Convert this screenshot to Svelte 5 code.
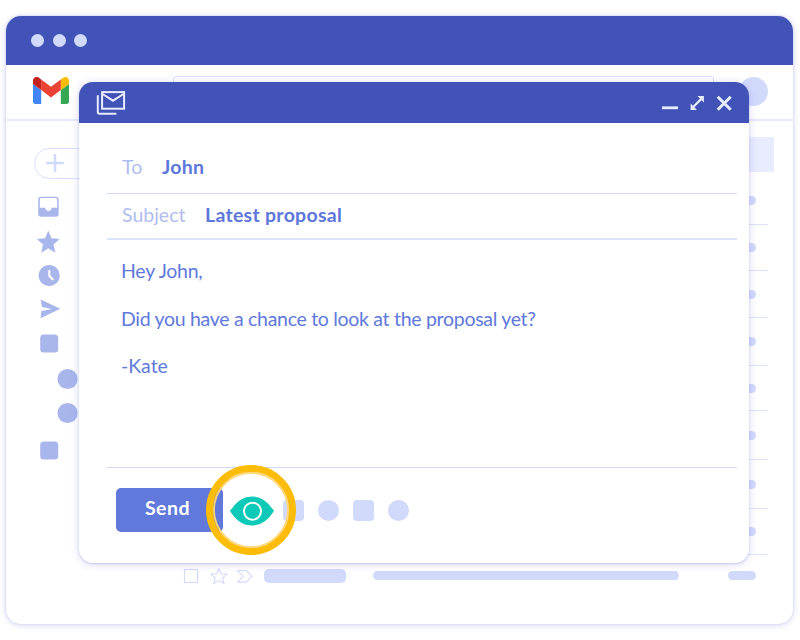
<script>
  const folders = [
    { kind: 'inbox', gap: 0 },
    { kind: 'star', gap: 11 },
    { kind: 'clock', gap: 10 },
    { kind: 'sent', gap: 9 },
    { kind: 'square', gap: 11 },
    { kind: 'dot', gap: 10.500 },
    { kind: 'dot', gap: 10 },
    { kind: 'square', gap: 14 }
  ];
  const rowHeights = [48, 46, 47, 48, 45, 49, 49, 46];
</script>

<div class="page">
  <div class="window">
    <div class="titlebar"><i></i><i></i><i></i></div>
    <div class="appbar">
      <svg class="logo" viewBox="52 42 88 66" width="36" height="27">
        <path fill="#4285f4" d="M58 108h14V74L52 59v43c0 3.32 2.69 6 6 6" />
        <path fill="#34a853" d="M120 108h14c3.32 0 6-2.69 6-6V59l-20 15" />
        <path fill="#fbbc04" d="M120 48v26l20-15v-8c0-7.42-8.47-11.65-14.4-7.2" />
        <path fill="#ea4335" d="M72 74V48l24 18 24-18v26L96 92" />
        <path fill="#c5221f" d="M52 51v8l20 15V48l-5.6-4.4c-5.94-4.45-14.4-.22-14.4 7.2" />
      </svg>
      <div class="search"></div>
      <div class="avatar"></div>
    </div>
    <div class="content">
      <nav>
        <div class="new">
          <svg width="18" height="18" viewBox="0 0 18 18"><path d="M9 1v16M1 9h16" stroke="#d2dafc" stroke-width="2.6" stroke-linecap="round" /></svg>
        </div>
        {#each folders as f}
          <svg class="folder" class:nested={f.kind === 'dot'} style="margin-top:{f.gap}px" width="24" height="24" viewBox="0 0 24 24" fill="#a9b6ec">
            {#if f.kind === 'inbox'}
              <path fill-rule="evenodd" d="M4.200 1.700h14.500a3 3 0 0 1 3 3v14a3 3 0 0 1-3 3H4.200a3 3 0 0 1-3-3v-14a3 3 0 0 1 3-3Zm0 1.400a1.400 1.400 0 0 0-1.400 1.600v8h5.400c.2 2 1.300 3.200 3.200 3.200s3.100-1.200 3.300-3.200h5.500v-8a1.500 1.500 0 0 0-1.500-1.600Z" />
            {:else if f.kind === 'star'}
              <path stroke="#a9b6ec" stroke-width=".6" stroke-linejoin="round" d="m11.300 1.300 3 7.300 7.800.7-5.900 5.200 1.800 7.700-6.700-4.100-6.700 4.100 1.800-7.700L.5 9.300l7.800-.7Z" />
            {:else if f.kind === 'clock'}
              <circle cx="12.200" cy="11.600" r="10.600" /><path d="M12.300 6.200v5.600l4 4.200" fill="none" stroke="#fff" stroke-width="2" />
            {:else if f.kind === 'sent'}
              <path d="M3.600 2.400 23.300 11.800 3.600 21.200l.8-7.200 10.400-2.100L5 10.100Z" />
            {:else if f.kind === 'square'}
              <rect x="3.200" y="2.500" width="18" height="18" rx="3.500" />
            {:else}
              <circle cx="11.600" cy="12" r="10.100" />
            {/if}
          </svg>
        {/each}
      </nav>
      <section class="list">
        <div class="toolbar"></div>
        {#each rowHeights as h}
          <div class="row" style="height:{h}px"><b class="pill"></b></div>
        {/each}
        <div class="row last">
          <svg width="71" height="18" viewBox="0 0 71 18" fill="none" stroke="#d2dafc" stroke-width="1.100">
            <rect x="2.500" y="2.500" width="13" height="13" />
            <path d="m36.900 1.700 2.300 5.100 5.500.5-4.100 3.700 1.300 5.500-5-2.900-5 2.900 1.300-5.500-4.100-3.700 5.500-.5Z" />
            <path d="M55.800 3.500h8.500l5.800 5.800-5.800 5.800h-8.500L61 9.300Z" />
          </svg>
          <b class="sender"></b><b class="summary"></b><b class="pill"></b>
        </div>
      </section>
    </div>
  </div>

  <div class="compose">
    <header>
      <svg width="30" height="26" viewBox="0 0 30 26" fill="none" stroke="#e8ecff" stroke-width="2">
        <rect x="6.100" y="2.100" width="22" height="16.600" />
        <path d="m6.500 4 10.500 6.700L27.500 4" />
        <path d="M1.800 5.200v16.900q0 1.700 1.700 1.700h16.900" />
      </svg>
      <div class="controls">
        <svg width="16" height="20" viewBox="0 0 16 20"><path d="M0 14.800h16" stroke="#e8ecff" stroke-width="2.800" /></svg>
        <svg width="14" height="20" viewBox="0 0 14 20" fill="#e8ecff"><path d="M7.500 3h6.400v6.400ZM.6 10.600V17H7Z" /><path d="m3 14.200 8.300-8.300" stroke="#e8ecff" stroke-width="2.300" /></svg>
        <svg width="16" height="20" viewBox="0 0 16 20"><path d="m1.700 3.700 13 13m0-13-13 13" stroke="#e8ecff" stroke-width="3" /></svg>
      </div>
    </header>
    <div class="form">
      <div class="field to"><span class="label l1">To</span><span class="value v1">John</span></div>
      <div class="field subject"><span class="label l2">Subject</span><span class="value v2">Latest proposal</span></div>
      <div class="message">
        <p class="m1">Hey John,</p>
        <p class="m2">Did you have a chance to look at the proposal yet?</p>
        <p class="m3">-Kate</p>
      </div>
      <footer>
        <button>Send</button>
        <svg class="eye" width="44" height="30" viewBox="0 0 44 30">
          <path fill="#0dcab8" d="M0 15Q9 .4 22 .4T44 15Q35 29.600 22 29.600T0 15Z" />
          <circle cx="22.500" cy="15.200" r="8.500" fill="none" stroke="#fff" stroke-width="1.900" />
        </svg>
        <div class="tools"><i class="sq"></i><i></i><i class="sq"></i><i></i></div>
        <div class="ring"></div>
      </footer>
    </div>
  </div>
</div>

<style>
  :global(body) { background: #fff; }
  .page, .page * { box-sizing: border-box; }
  .page {
    position: relative;
    width: 800px;
    height: 640px;
    padding: 16px 7px 0 6px;
    overflow: hidden;
    font-family: Lato, "Open Sans", sans-serif;
  }
  .window {
    height: 608px;
    border-radius: 15px;
    background: #fff;
    overflow: hidden;
    box-shadow: 0 0 1px 1px #dfe2f8, 0 1px 6px rgba(80, 80, 200, .25);
  }
  .titlebar {
    display: flex;
    align-items: center;
    gap: 8.500px;
    height: 48.500px;
    padding-left: 25px;
    background: #4153b6;
  }
  .titlebar i { width: 13px; height: 13px; border-radius: 50%; background: #d2dafc; }
  .appbar {
    display: flex;
    height: 56.500px;
    padding: 12px 25px 0 27px;
    border-bottom: 2px solid #e6eafd;
  }
  .search {
    width: 541px;
    height: 30px;
    margin: -1px 0 0 104px;
    border: 1px solid #d7dffd;
    border-radius: 3px;
  }
  .avatar { width: 29px; height: 29px; margin-left: auto; border-radius: 50%; background: #d2dafc; }
  .content { display: flex; }
  nav { display: flex; flex-direction: column; width: 168px; padding: 27px 0 0 28px; }
  .new {
    width: 116px;
    height: 31px;
    margin-bottom: 16px;
    padding: 5px 0 0 11px;
    border: 1px solid #d7dffd;
    border-radius: 16px;
  }
  .new svg { display: block; }
  .folder { display: block; margin-left: 2.500px; flex: none; }
  .nested { margin-left: 21.700px; }
  .list { width: 594px; padding-top: 16px; }
  .toolbar { width: 600px; height: 35px; margin-bottom: 5px; background: #e8ecfe; }
  .row {
    display: flex;
    align-items: center;
    justify-content: flex-end;
    padding-right: 12px;
    border-bottom: 1px solid #dde3fb;
  }
  .pill { width: 28px; height: 9px; border-radius: 5px; background: #d2dafc; }
  .last { height: 41px; border: 0; justify-content: flex-start; padding: 0 0 0 8px; }
  .sender { width: 82px; height: 14px; margin-left: 11px; border-radius: 5px; background: #d2dafc; }
  .summary { width: 306px; height: 9px; margin: 0 49px 0 27px; border-radius: 5px; background: #d2dafc; }

  .compose {
    position: absolute;
    left: 79px;
    top: 82px;
    width: 670px;
    height: 481px;
    border-radius: 14px;
    background: #fff;
    box-shadow: 0 1px 2px rgba(80, 80, 190, .22), 0 1px 8px rgba(80, 80, 210, .22);
  }
  header {
    display: flex;
    justify-content: space-between;
    align-items: center;
    height: 41px;
    padding: 0 17px;
    border-radius: 14px 14px 0 0;
    background: #4153b6;
  }
  .controls { display: flex; gap: 12px; }
  .form { padding: 0 12px 0 28px; }
  .field { display: flex; padding-left: 15px; font-size: 19.500px; line-height: 24px; white-space: nowrap; }
  .to { height: 71px; padding-top: 32px; border-bottom: 1px solid #d2dafc; }
  .subject { height: 46px; padding-top: 9px; border-bottom: 2px solid #dce3fd; }
  .label { color: #b0bdf1; }
  .value { color: #5d77db; font-weight: 700; letter-spacing: .28px; }
  .l1 { width: 40px; }
  .l2 { width: 83px; }
  .message { height: 227px; padding: 19px 0 0 14px; color: #6079dc; font-size: 19.500px; line-height: 24px; }
  p { margin: 0 0 23.500px; white-space: nowrap; }
  .m1 { letter-spacing: -.25px; }
  .m2 { letter-spacing: -.3px; }
  footer {
    position: relative;
    display: flex;
    align-items: center;
    height: 86px;
    padding-left: 9px;
    border-top: 1px solid #cfd8fb;
  }
  button {
    width: 107px;
    height: 44px;
    margin-top: -2px;
    padding: 0 4px 5px 0;
    border: 0;
    border-radius: 5px;
    background: #6079da;
    color: #fff;
    font: 700 19.500px Lato, sans-serif;
    letter-spacing: .5px;
  }
  .eye { margin: 0 0 0 7px; }
  .tools { display: flex; gap: 14px; margin: 0 0 0 8.500px; }
  .tools i { width: 21px; height: 21px; border-radius: 50%; background: #d2dafc; }
  .tools .sq { border-radius: 4px; }
  .ring {
    position: absolute;
    left: 99px;
    top: -3px;
    width: 90px;
    height: 90px;
    border: 7.500px solid #fcbc08;
    border-radius: 50%;
    box-shadow: inset 0 0 0 1.800px #fed77b;
  }
</style>
